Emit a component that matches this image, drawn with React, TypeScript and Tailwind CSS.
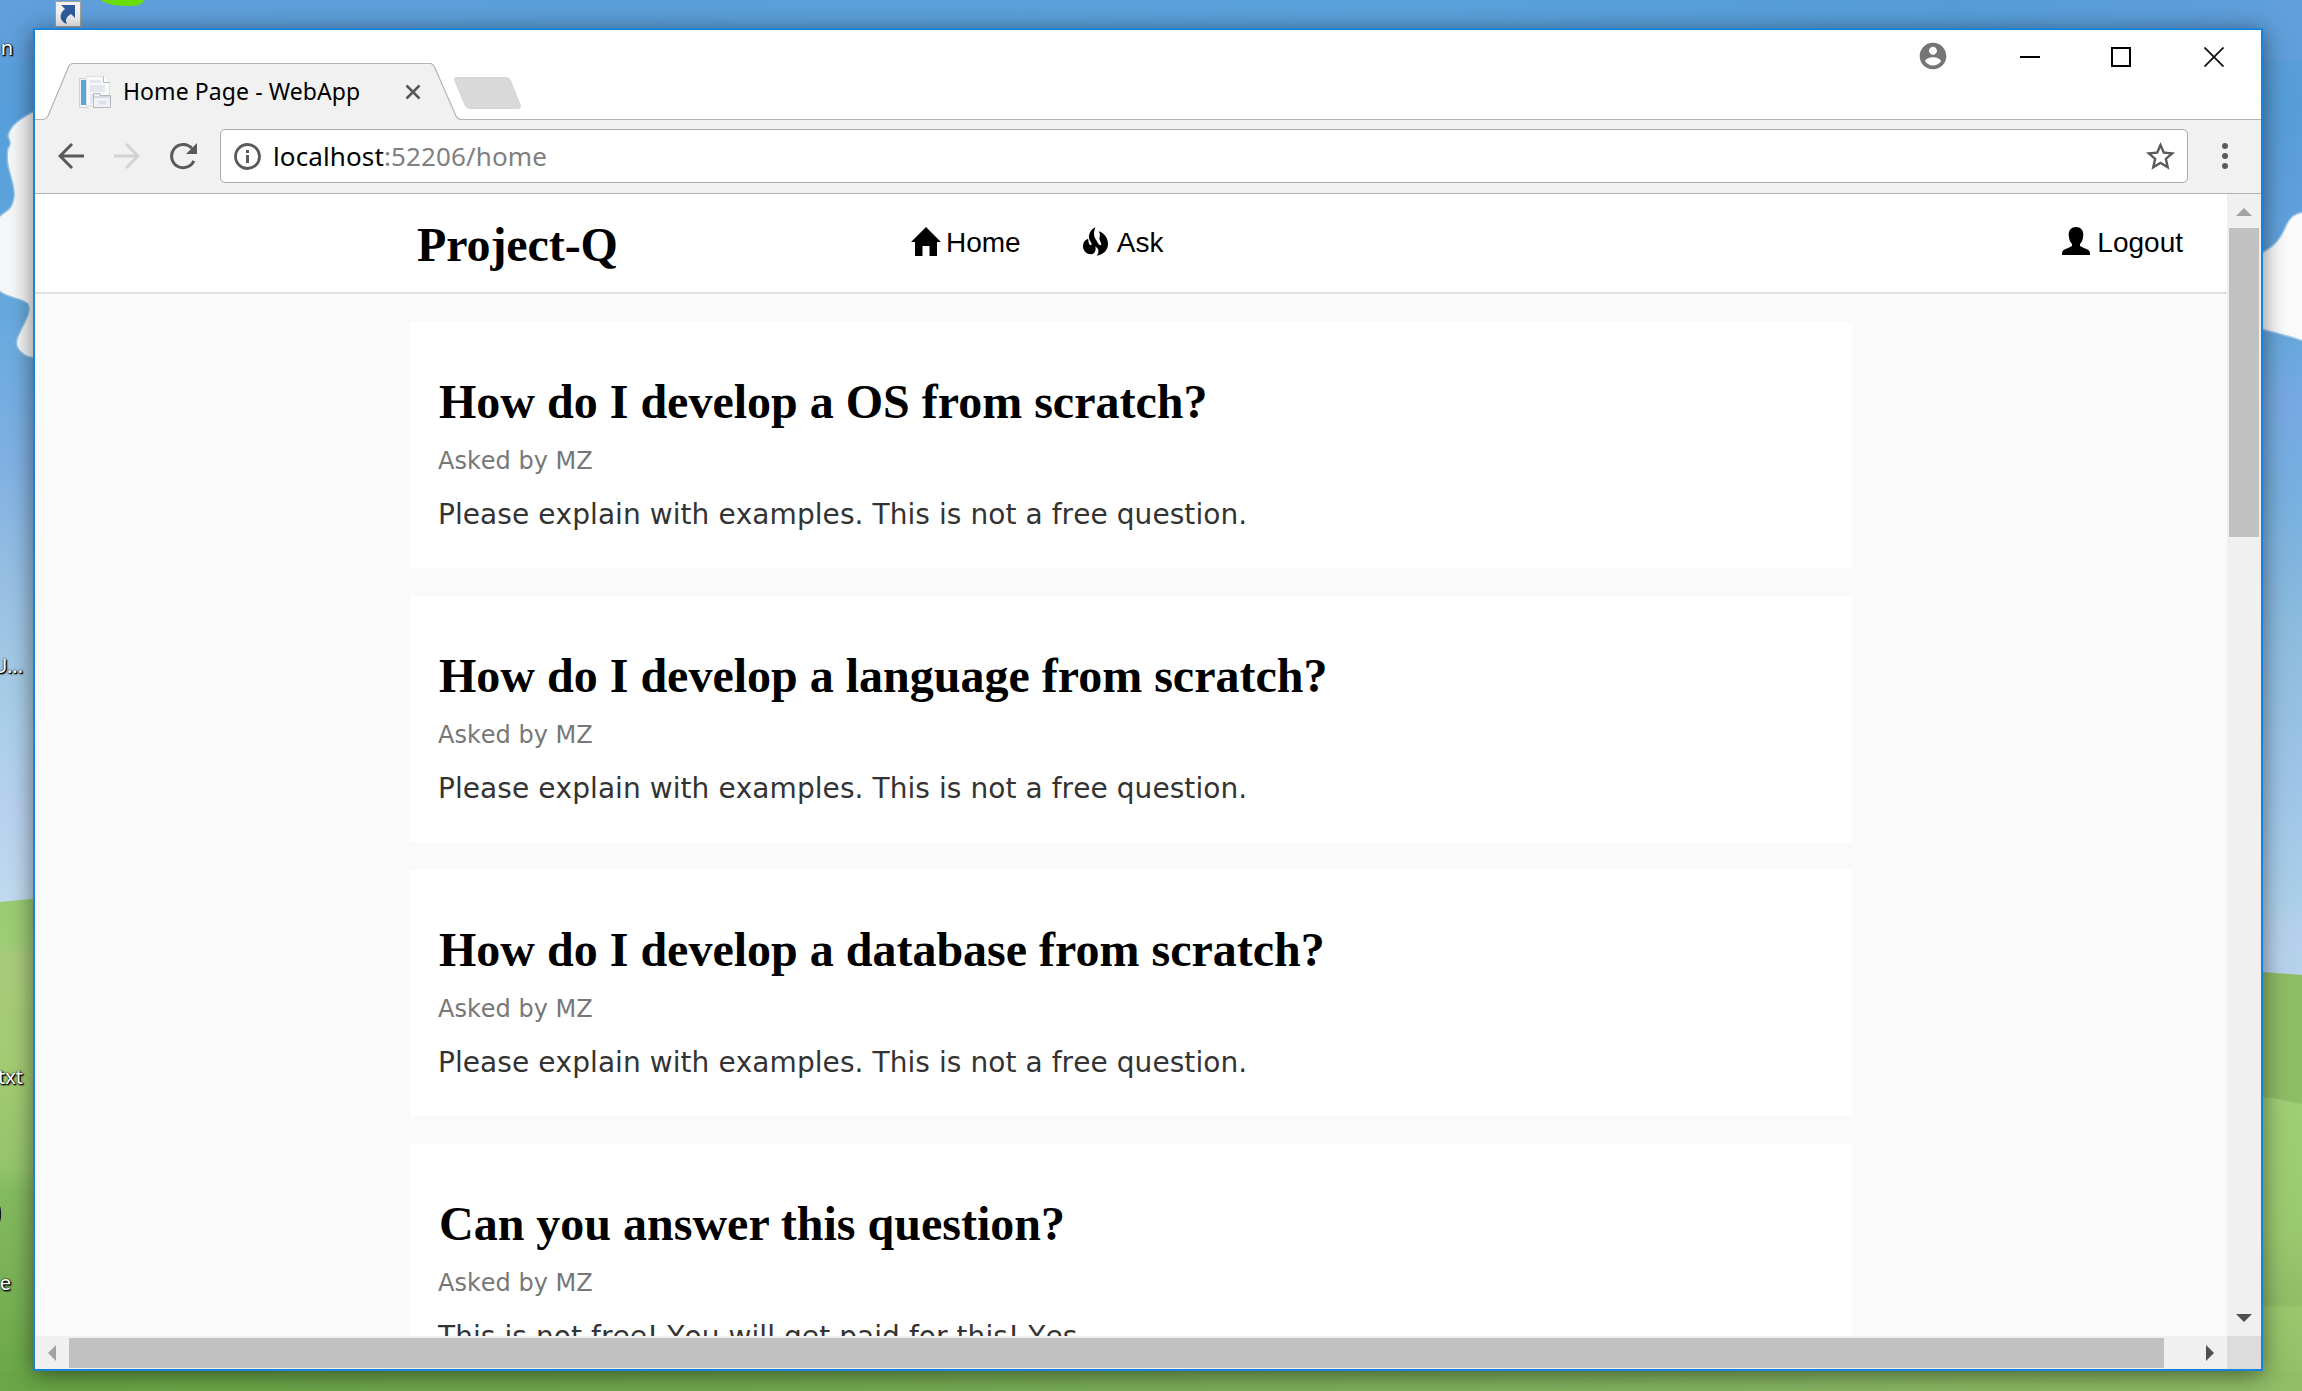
import type { ReactNode } from "react";

type Question = { title: string; author: string; body: string };

const questions: Question[] = [
  {
    title: "How do I develop a OS from scratch?",
    author: "MZ",
    body: "Please explain with examples. This is not a free question.",
  },
  {
    title: "How do I develop a language from scratch?",
    author: "MZ",
    body: "Please explain with examples. This is not a free question.",
  },
  {
    title: "How do I develop a database from scratch?",
    author: "MZ",
    body: "Please explain with examples. This is not a free question.",
  },
  {
    title: "Can you answer this question?",
    author: "MZ",
    body: "This is not free! You will get paid for this! Yes",
  },
];

function Wallpaper() {
  return (
    <svg className="absolute inset-0 h-full w-full" viewBox="0 0 2302 1391" preserveAspectRatio="none">
      <defs>
        <linearGradient id="skyLeft" x1="0" y1="0" x2="0" y2="1">
          <stop offset="0" stopColor="#609fdc" />
          <stop offset="0.12" stopColor="#579fdc" />
          <stop offset="0.32" stopColor="#64a9de" />
          <stop offset="0.5" stopColor="#80b1e3" />
          <stop offset="0.66" stopColor="#9cc3e4" />
          <stop offset="0.78" stopColor="#abcfe8" />
          <stop offset="0.88" stopColor="#b8d2ef" />
          <stop offset="1" stopColor="#c3dcf0" />
        </linearGradient>
        <linearGradient id="skyRight" x1="0" y1="0" x2="0" y2="1">
          <stop offset="0" stopColor="#609fdc" />
          <stop offset="0.1" stopColor="#569dd8" />
          <stop offset="0.2" stopColor="#5f9fdc" />
          <stop offset="0.35" stopColor="#6aa8de" />
          <stop offset="0.4" stopColor="#76a9e2" />
          <stop offset="0.5" stopColor="#78b0df" />
          <stop offset="0.65" stopColor="#8fbddf" />
          <stop offset="0.8" stopColor="#a0c6e8" />
          <stop offset="0.9" stopColor="#abcfe8" />
          <stop offset="0.93" stopColor="#b6d0ec" />
          <stop offset="1" stopColor="#b8d5ea" />
        </linearGradient>
        <linearGradient id="topSky" x1="0" y1="0" x2="1" y2="0">
          <stop offset="0" stopColor="#609fdc" />
          <stop offset="0.25" stopColor="#5b9fda" />
          <stop offset="0.6" stopColor="#5aa2dc" />
          <stop offset="0.85" stopColor="#569dd8" />
          <stop offset="1" stopColor="#609fdc" />
        </linearGradient>
        <linearGradient id="hillLeft" x1="0" y1="0" x2="0" y2="1">
          <stop offset="0" stopColor="#9acb74" />
          <stop offset="0.09" stopColor="#9ecd77" />
          <stop offset="0.12" stopColor="#a9cc7c" />
          <stop offset="0.35" stopColor="#a3cc74" />
          <stop offset="0.54" stopColor="#96c56c" />
          <stop offset="0.6" stopColor="#84ba60" />
          <stop offset="0.75" stopColor="#7db358" />
          <stop offset="1" stopColor="#69a747" />
        </linearGradient>
        <linearGradient id="hillRight" x1="0" y1="0" x2="0" y2="1">
          <stop offset="0" stopColor="#9fcf75" />
          <stop offset="0.45" stopColor="#9bc970" />
          <stop offset="0.7" stopColor="#90bd66" />
          <stop offset="0.72" stopColor="#9ac76e" />
          <stop offset="1" stopColor="#91be67" />
        </linearGradient>
        <linearGradient id="bottomGrass" x1="0" y1="0" x2="1" y2="0">
          <stop offset="0" stopColor="#69a747" />
          <stop offset="0.3" stopColor="#74aa4f" />
          <stop offset="0.6" stopColor="#80b35f" />
          <stop offset="1" stopColor="#91be67" />
        </linearGradient>
      </defs>
      <rect width="1151" height="920" fill="url(#skyLeft)" />
      <rect x="1151" width="1151" height="1000" fill="url(#skyRight)" />
      <rect width="2302" height="60" fill="url(#topSky)" />
      <path d="M0 902L40 898V1391H0Z" fill="url(#hillLeft)" />
      <path d="M2250 971L2302 975V1391H2250Z" fill="#8fbc66" />
      <path d="M2250 1098C2275 1096 2288 1102 2302 1104V1391H2250Z" fill="url(#hillRight)" />
      <rect y="1371" width="2302" height="20" fill="url(#bottomGrass)" />
      <path
        d="M36 110C22 118 10 124 8 136C9 141 12 143 8 148C4 168 15 180 14 196C12 212 5 210 -2 218V290C6 298 22 298 28 304C32 312 24 322 18 336C12 348 24 358 36 358Z"
        fill="#f6f7f8"
        stroke="#8fc1e6"
        strokeWidth="1.5"
      />
      <path
        d="M2258 255C2272 248 2279 242 2285 228C2290 217 2294 213 2306 212V342C2290 336 2276 333 2258 328Z"
        fill="#fbfbfb"
        stroke="#a5cdea"
        strokeWidth="1.5"
      />
      <path d="M101 0H144C143 4 137 6 130 6C120 6 106 5 101 0Z" fill="#6ade06" />
      <rect x="55.5" y="1.5" width="25" height="25" fill="#f3f3f3" stroke="#a8a29c" />
      <path d="M61 5H75V18L71 14C66 17 65 20 67 24C60 22 58 14 65 9Z" fill="#2f5c9e" />
      <path d="M0 1206C1.500 1210 1.500 1218 0 1222Z" fill="#15152a" />
    </svg>
  );
}

function DesktopLabel({ className, children }: { className: string; children: ReactNode }) {
  return (
    <span
      className={`absolute text-right font-['Noto_Sans',sans-serif] text-[20px] leading-6 whitespace-nowrap text-white [text-shadow:1px_1px_2px_#000,0_0_2px_#000,1px_1px_1px_#000] ${className}`}
    >
      {children}
    </span>
  );
}

function PageIcon() {
  return (
    <svg className="h-8 w-8 shrink-0" viewBox="0 0 32 32">
      <path d="M.5 2.500H9V31.500H.5Z" fill="#f3f4f6" stroke="#d0d2d6" />
      <rect x="2" y="4" width="5" height="25" fill="#5aa5d6" />
      <path d="M7.500.5H24.500L30.500 6.500V29.500H7.500Z" fill="#f8f9fb" stroke="#dfe1e5" />
      <path d="M24.500.5V6.500H30.500" fill="#fff" stroke="#b6b9be" />
      <path d="M11 4H22V7H11ZM11 9H26V16H11ZM11 18H14V28H11Z" fill="#e3e7ee" />
      <path d="M14.500 17.500H21V19.500H31.500V31.500H14.500Z" fill="#f1f2f7" stroke="#b5b8bf" />
      <path d="M15 20H31V22H15Z" fill="#d5d8e0" />
      <path d="M19 25H27V28.500H19Z" fill="#dcdfec" />
    </svg>
  );
}

function TitleBar() {
  return (
    <div className="flex h-[90px] shrink-0 items-start justify-between border-b border-[#b3b3b3] bg-white">
      <div className="flex pt-[33px]">
        <div className="relative z-10 flex h-[58px] w-[426px] items-center pr-[40px] pl-[44px]">
          <svg className="absolute inset-0 h-[58px] w-[426px]" viewBox="0 0 426 58">
            <path
              d="M0 58V57H7Q11 56.500 13 53L33.500 4Q35 .5 38 .5H395Q398 .5 399.500 4L421 53Q423 56.500 426 56.500V58Z"
              fill="#f1f1f1"
            />
            <path
              d="M0 56.500H7Q11 56.500 13 53L33.500 4Q35 .5 38 .5H395Q398 .5 399.500 4L421 53Q423 56.500 426 56.500"
              fill="none"
              stroke="#b3b3b3"
              strokeWidth="1.200"
            />
          </svg>
          <div className="relative flex w-full items-center">
            <PageIcon />
            <span className="-mt-[2px] ml-[12px] font-['Noto_Sans',sans-serif] text-[23px] leading-8 tracking-[0.08px] whitespace-nowrap text-black">
              Home Page - WebApp
            </span>
            <svg className="ml-auto h-4 w-4 shrink-0" viewBox="0 0 16 16">
              <path d="M1.500 1.500L14.500 14.500M14.500 1.500L1.500 14.500" stroke="#595959" strokeWidth="2.500" />
            </svg>
          </div>
        </div>
        <svg className="mt-[13px] -ml-[8px] h-[34px] w-[68px]" viewBox="0 0 68 34">
          <path
            d="M3 1.500H53Q56 1.500 57.500 4.500L67.500 29.500Q68 32.500 65 32.500H17Q14 32.500 12.500 30L1.500 4Q1 1.500 3 1.500Z"
            fill="#d9d9d9"
            stroke="#cfcfcf"
            strokeWidth="0.800"
          />
        </svg>
      </div>
      <div className="flex items-center pt-[10px] pr-[37px]">
        <svg className="h-8 w-8" viewBox="0 0 24 24" fill="#757575">
          <path d="M12 2C6.480 2 2 6.480 2 12s4.480 10 10 10 10-4.480 10-10S17.520 2 12 2zm0 3c1.660 0 3 1.340 3 3s-1.340 3-3 3-3-1.340-3-3 1.340-3 3-3zm0 14.200c-2.500 0-4.710-1.280-6-3.220.03-1.990 4-3.080 6-3.080 1.990 0 5.970 1.090 6 3.080-1.290 1.940-3.500 3.220-6 3.220z" />
        </svg>
        <span className="mt-[2px] ml-[71px] h-[2px] w-5 bg-black" />
        <span className="mt-[2px] ml-[71px] h-5 w-5 border-2 border-black" />
        <svg className="mt-[2px] ml-[73px] h-5 w-5" viewBox="0 0 20 20">
          <path d="M.5.5L19.500 19.500M19.500.5L.5 19.500" stroke="#111" strokeWidth="1.800" />
        </svg>
      </div>
    </div>
  );
}

function Toolbar() {
  return (
    <div className="flex h-[74px] shrink-0 items-center border-b border-[#b3b3b3] bg-[#f1f1f1] pb-px pl-[23px]">
      <svg className="h-[26px] w-[26px]" viewBox="0 0 26 26" fill="none" stroke="#5a5a5a" strokeWidth="3">
        <path d="M26 13H2M14 1L2 13L14 25" />
      </svg>
      <svg className="ml-[30px] h-[26px] w-[26px]" viewBox="0 0 26 26" fill="none" stroke="#d2d2d2" strokeWidth="3">
        <path d="M0 13H24M12 1L24 13L12 25" />
      </svg>
      <svg className="ml-[30px] h-[27px] w-[27px]" viewBox="0 0 27 27">
        <path d="M21.800 5.300A11.600 11.600 0 1 0 23.800 17.800" fill="none" stroke="#5a5a5a" strokeWidth="3" />
        <path d="M27 0V11H16Z" fill="#5a5a5a" />
      </svg>
      <div className="ml-[23px] flex h-[54px] w-[1968px] items-center rounded-[5px] border border-[#a9a9a9] bg-white pr-[9px] pl-[13px]">
        <svg className="h-[27px] w-[27px]" viewBox="0 0 27 27">
          <circle cx="13.500" cy="13.500" r="12" fill="none" stroke="#5a5a5a" strokeWidth="2.800" />
          <path d="M12 7H15V10H12ZM12 12H15V20H12Z" fill="#5a5a5a" />
        </svg>
        <span className="-mt-px ml-[12px] font-['Noto_Sans',sans-serif] text-[26px] leading-8 tracking-[0.12px] text-[#808080]">
          <span className="text-black">localhost</span>:52206/home
        </span>
        <svg className="ml-auto h-[35px] w-[35px]" viewBox="0 0 24 24" fill="#5a5a5a">
          <path d="M22 9.240l-7.190-.62L12 2 9.190 8.630 2 9.240l5.460 4.730L5.820 21 12 17.270 18.180 21l-1.630-7.030L22 9.240zM12 15.400l-3.760 2.270 1-4.280-3.320-2.880 4.380-.38L12 6.100l1.710 4.040 4.380.38-3.320 2.880 1 4.280L12 15.400z" />
        </svg>
      </div>
      <svg className="ml-[34px] h-[26px] w-[6px]" viewBox="0 0 6 26" fill="#5a5a5a">
        <circle cx="3" cy="3" r="3" />
        <circle cx="3" cy="13" r="3" />
        <circle cx="3" cy="23" r="3" />
      </svg>
    </div>
  );
}

function HomeIcon() {
  return (
    <svg className="h-[29px] w-[30px]" viewBox="0 0 30 29">
      <path d="M15 0L30 15H26V29H18.500V19H11.500V29H4V15H0Z" />
    </svg>
  );
}

function FireIcon() {
  return (
    <svg className="h-[29px] w-[25px]" viewBox="0 0 75 86">
      <path d="M38 0C24 6 17 18 18 32C19 42 27 47 26 52C24 55 20 54 18 49C16 44 17 40 15 35C5 39 0 46 0 57C0 71 11 81 24 81C36 80 40 70 37 58C43 62 46 66 46 70C47 77 45 81 41 86C62 82 75 69 75 50C75 32 64 17 47 12C53 20 51 28 49 34C49 40 55 46 55 52C53 57 48 54 44 46C37 36 33 30 33 20C33 12 35 5 38 0Z" />
    </svg>
  );
}

function UserIcon() {
  return (
    <svg className="h-7 w-7" viewBox="0 0 28 28">
      <path d="M14 0C18.500 0 21.500 3 21.300 8C21.200 12.500 19.500 15.500 18 17V19C20 20.500 25 21.800 27 23.500C28 24.500 28 26 28 28H0C0 26 0 24.500 1 23.500C3 21.800 8 20.500 10 19V17C8.500 15.500 6.800 12.500 6.700 8C6.500 3 9.500 0 14 0Z" />
    </svg>
  );
}

function NavLink({ icon, label, className }: { icon: ReactNode; label: string; className: string }) {
  return (
    <a className={`flex items-center text-[28px] leading-8 ${className}`}>
      <span className="-mt-[4px]">{icon}</span>
      {label}
    </a>
  );
}

function SiteHeader() {
  return (
    <header className="flex h-[100px] shrink-0 items-center border-b-2 border-[#e0e0e0] bg-white pl-[382px] font-['Liberation_Sans',Arial,sans-serif] text-black">
      <h1 className="w-[494px] pt-[3px] font-['Liberation_Serif',serif] text-[48px] leading-none font-bold tracking-[-0.1px]">
        Project-Q
      </h1>
      <NavLink icon={<HomeIcon />} label="Home" className="gap-[5px]" />
      <NavLink icon={<FireIcon />} label="Ask" className="ml-[62px] gap-[9px]" />
      <NavLink icon={<UserIcon />} label="Logout" className="mr-[44px] ml-auto gap-[7px]" />
    </header>
  );
}

function QuestionCard({ title, author, body }: Question) {
  return (
    <article className="h-[246px] w-[1442px] shrink-0 bg-white px-[29px] pt-[52px] whitespace-nowrap">
      <h2 className="font-['Liberation_Serif',serif] text-[48px] leading-[56px] font-bold text-black">{title}</h2>
      <p className="mt-[14px] -ml-px font-['DejaVu_Sans',Verdana,sans-serif] text-[24px] leading-[34px] text-[#777] [font-kerning:none]">
        Asked by {author}
      </p>
      <p className="mt-[17px] -ml-px font-['DejaVu_Sans',Verdana,sans-serif] text-[28px] leading-[40px] tracking-[0.07px] text-[#333] [font-kerning:none]">
        {body}
      </p>
    </article>
  );
}

function VerticalScrollbar() {
  return (
    <div className="flex w-[34px] shrink-0 flex-col items-center bg-[#f0f0f0]">
      <svg className="mt-[14px] h-2 w-4" viewBox="0 0 16 8" fill="#a3a3a3">
        <path d="M8 0L16 8H0Z" />
      </svg>
      <div className="mt-[12px] h-[309px] w-[30px] bg-[#c1c1c1]" />
      <svg className="mt-auto mb-[14px] h-2 w-4" viewBox="0 0 16 8" fill="#505050">
        <path d="M0 0H16L8 8Z" />
      </svg>
    </div>
  );
}

function HorizontalScrollbar() {
  return (
    <div className="flex h-[33px] shrink-0 bg-[#f0f0f0]">
      <svg className="mt-[9px] ml-[13px] h-4 w-2" viewBox="0 0 8 16" fill="#a3a3a3">
        <path d="M8 0V16L0 8Z" />
      </svg>
      <div className="mt-[2px] ml-[13px] h-[30px] w-[2095px] bg-[#c1c1c1]" />
      <svg className="mt-[9px] ml-[42px] h-4 w-2" viewBox="0 0 8 16" fill="#505050">
        <path d="M0 0L8 8L0 16Z" />
      </svg>
      <div className="ml-auto w-[34px] bg-[#dcdcdc]" />
    </div>
  );
}

export default function App() {
  return (
    <div className="relative h-[1391px] w-[2302px] overflow-hidden bg-[#5f9edc]">
      <Wallpaper />
      <DesktopLabel className="top-[36px] right-[2289px]">n</DesktopLabel>
      <DesktopLabel className="top-[654px] right-[2279px]">U...</DesktopLabel>
      <DesktopLabel className="top-[1065px] right-[2279px]">txt</DesktopLabel>
      <DesktopLabel className="top-[1271px] right-[2291px]">e</DesktopLabel>

      <main className="absolute top-[28px] left-[33px] flex h-[1343px] w-[2230px] flex-col border-2 border-[#1a83d9] bg-white shadow-[0_4px_22px_rgba(0,0,0,0.5)]">
        <TitleBar />
        <Toolbar />
        <div className="flex min-h-0 flex-1">
          <div className="flex min-w-0 flex-1 flex-col overflow-hidden bg-[#fafafa]">
            <SiteHeader />
            <section className="flex min-h-0 flex-1 flex-col gap-[28px] pt-[28px] pl-[375px]">
              {questions.map((q) => (
                <QuestionCard key={q.title} {...q} />
              ))}
            </section>
          </div>
          <VerticalScrollbar />
        </div>
        <HorizontalScrollbar />
      </main>
    </div>
  );
}
